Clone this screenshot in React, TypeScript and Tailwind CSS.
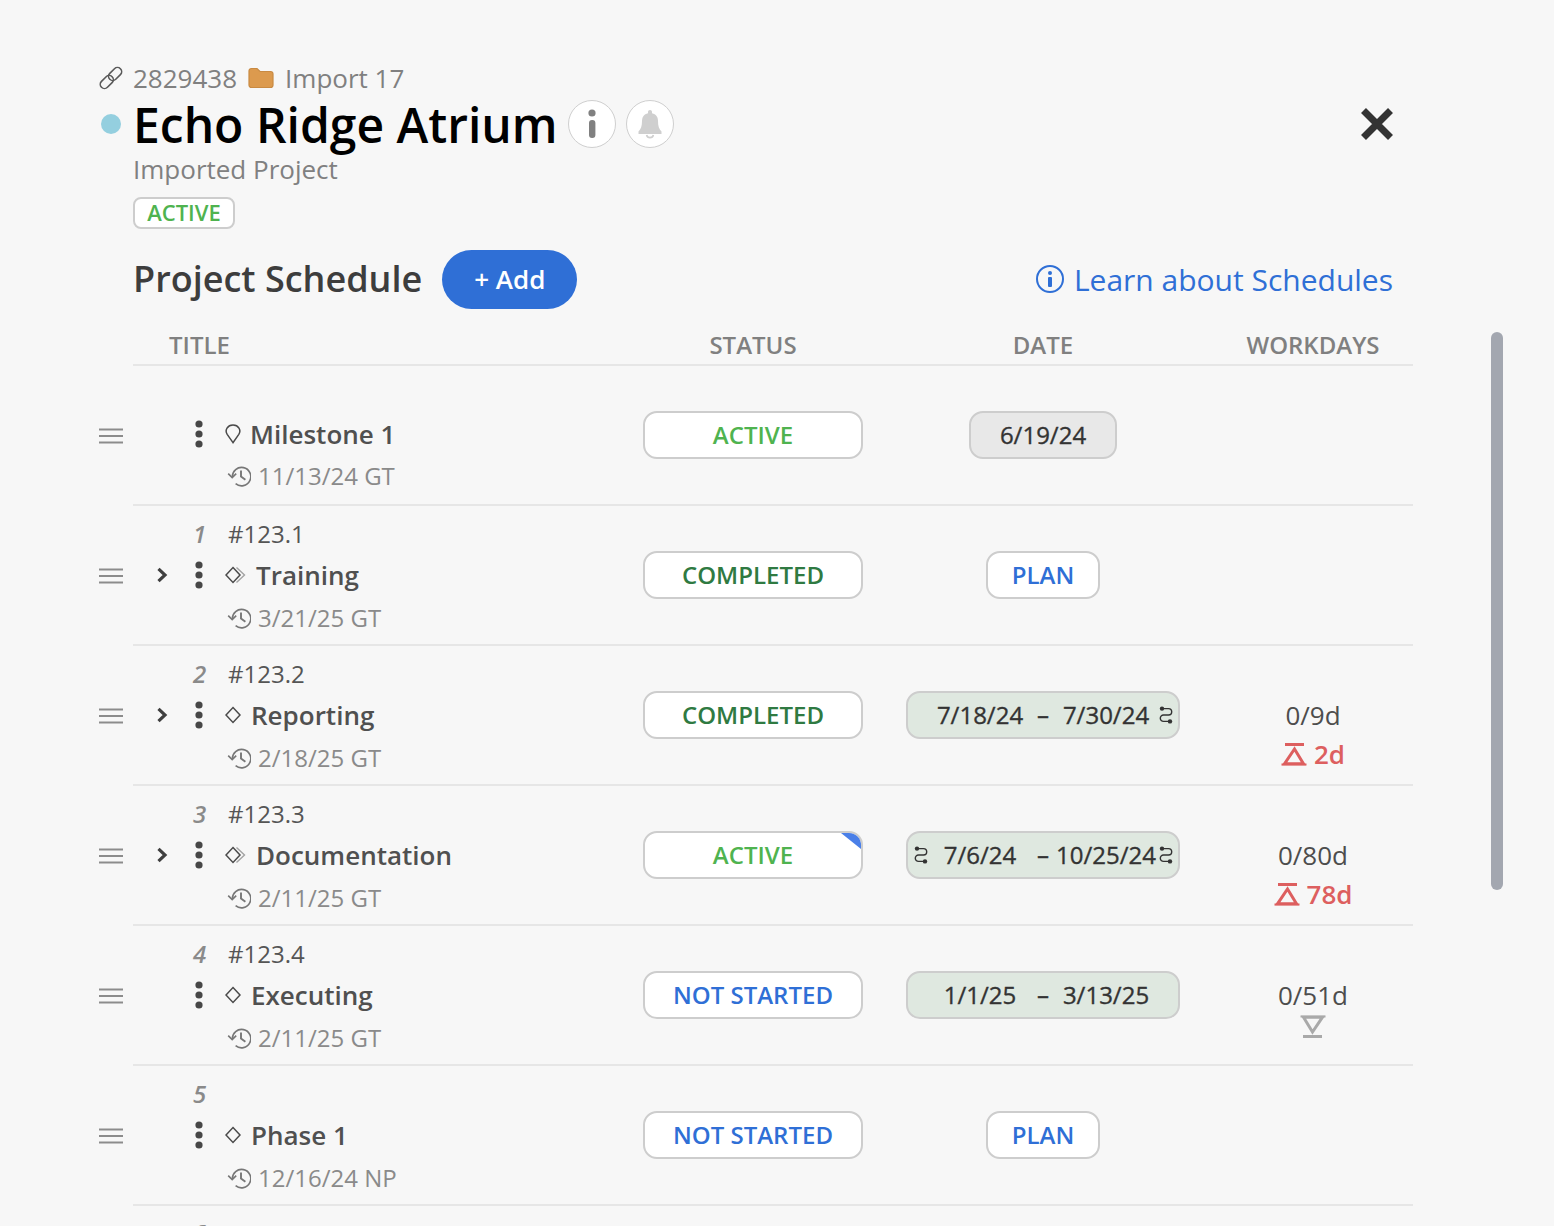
function LinkIcon() {
  return (
    <svg width="24" height="24" viewBox="0 0 24 24" className="block">
      <g fill="none" stroke="#5a5a5a" strokeWidth="1.6">
        <rect x="3.6" y="8.5" width="8.4" height="15" rx="4.2" transform="rotate(45 7.8 16)" />
        <rect x="11.9" y="0.5" width="8.4" height="15" rx="4.2" transform="rotate(45 16.1 8)" />
      </g>
    </svg>
  );
}

function HistoryIcon() {
  return (
    <svg width="24" height="24" viewBox="0 0 24 24" className="block">
      <g fill="none" stroke="#777777" strokeWidth="1.6">
        <path d="M5.4 13 A9.2 9.2 0 1 1 8.6 19.6" />
        <path d="M1.2 9.6 L5.2 13.6 L9.2 9.6" />
        <path d="M14 6.5 V12.6 L18.4 15.8" strokeWidth="1.9" />
      </g>
    </svg>
  );
}

function Handle() {
  return (
    <svg width="24" height="16" viewBox="0 0 24 16" className="block">
      <g stroke="#8c8c8c" strokeWidth="2">
        <line x1="0" x2="24" y1="1.5" y2="1.5" />
        <line x1="0" x2="24" y1="8" y2="8" />
        <line x1="0" x2="24" y1="14.5" y2="14.5" />
      </g>
    </svg>
  );
}

function Kebab() {
  return (
    <svg width="8" height="30" viewBox="0 0 8 30" className="block">
      <circle cx="4" cy="5" r="3.6" fill="#474747" />
      <circle cx="4" cy="15" r="3.6" fill="#474747" />
      <circle cx="4" cy="25" r="3.6" fill="#474747" />
    </svg>
  );
}

function Chevron() {
  return (
    <svg width="12" height="16" viewBox="0 0 12 16" className="block">
      <path d="M2.5 1.8 L9 8 L2.5 14.2" fill="none" stroke="#3f3f3f" strokeWidth="3.2" />
    </svg>
  );
}

function Pin() {
  return (
    <svg width="16" height="20" viewBox="0 0 16 20" className="block">
      <path d="M8 18.6 L2.2 10.4 C-0.6 6 2.6 1 8 1 C13.4 1 16.6 6 13.8 10.4 Z" fill="none" stroke="#4a4a4a" strokeWidth="1.5" />
    </svg>
  );
}

function Diamond({ double }: { double?: boolean }) {
  return (
    <svg width={double ? 21 : 16} height="18" viewBox={double ? "0 0 21 18" : "0 0 16 18"} className="block">
      <path d="M8 1.6 L15 9 L8 16.4 L1 9 Z" fill="none" stroke="#4a4a4a" strokeWidth="1.5" />
      {double && <path d="M11.5 1.6 L19.5 9 L11.5 16.4" fill="none" stroke="#a3a3a3" strokeWidth="1.4" />}
    </svg>
  );
}

function Route({ className }: { className: string }) {
  return (
    <svg width="14" height="18" viewBox="0 0 14 18" className={className}>
      <circle cx="3" cy="2.6" r="2.2" fill="#333" />
      <circle cx="11" cy="15.4" r="2.2" fill="#333" />
      <path d="M3 2.6 H9.5 A3.2 3.2 0 0 1 9.5 9 H4.5 A3.2 3.2 0 0 0 4.5 15.4 H11" fill="none" stroke="#333" strokeWidth="1.4" />
    </svg>
  );
}

function Hourglass({ color, down }: { color: string; down?: boolean }) {
  return (
    <svg width="26" height="23" viewBox="0 0 26 23" className={down ? "block rotate-180" : "block"}>
      <line x1="4" x2="23" y1="1.5" y2="1.5" stroke={color} strokeWidth="3" />
      <path d="M13.5 6 L22.5 20.8 H3.5 Z" fill="none" stroke={color} strokeWidth="3" />
      <line x1="0.5" x2="25.5" y1="21.5" y2="21.5" stroke={color} strokeWidth="2" />
    </svg>
  );
}

function StatusPill({ text, color, corner }: { text: string; color: string; corner?: boolean }) {
  return (
    <div className="relative flex h-[48px] w-[220px] items-center justify-center overflow-hidden rounded-[14px] border-2 border-[#cdcdcd] bg-white">
      <span className={`text-[24px] font-semibold leading-none ${color}`}>{text}</span>
      {corner && <div className="absolute right-0 top-0 h-[16px] w-[20px] bg-[#4a7fe8] [clip-path:polygon(0_0,100%_0,100%_100%)]" />}
    </div>
  );
}

type DateProps = { left: string; right: string; routeL?: boolean; routeR?: boolean };

function DateRange({ left, right, routeL, routeR }: DateProps) {
  return (
    <div className="relative grid h-[48px] w-[274px] grid-cols-[102px_24px_102px] items-center rounded-[14px] border-2 border-[#cdcdcd] bg-[#dfe8e0] px-[21px] text-center text-[24px] leading-none text-[#333333] [-webkit-text-stroke:0.35px_#333333]">
      <span className="whitespace-nowrap">{left}</span>
      <span>–</span>
      <span className="whitespace-nowrap">{right}</span>
      {routeL && <Route className="absolute left-[6px] top-[13px]" />}
      {routeR && <Route className="absolute right-[5px] top-[13px]" />}
    </div>
  );
}

type Row = {
  num?: string;
  id?: string;
  chevron?: boolean;
  icon: "pin" | "diamond" | "double";
  title: string;
  titleGap: string;
  sub: string;
  status: { text: string; color: string; corner?: boolean };
  date:
    | { kind: "single"; text: string }
    | { kind: "plan" }
    | { kind: "range"; left: string; right: string; routeL?: boolean; routeR?: boolean };
  work?: { base: string; late?: string; down?: boolean };
};

const ACTIVE = { text: "ACTIVE", color: "text-[#4fb34f]" };
const COMPLETED = { text: "COMPLETED", color: "text-[#2f7a42]" };
const NOT_STARTED = { text: "NOT STARTED", color: "text-[#2f6fd6]" };

const rows: Row[] = [
  { icon: "pin", title: "Milestone 1", titleGap: "ml-[9px]", sub: "11/13/24 GT", status: ACTIVE, date: { kind: "single", text: "6/19/24" } },
  { num: "1", id: "#123.1", chevron: true, icon: "double", title: "Training", titleGap: "ml-[10px]", sub: "3/21/25 GT", status: COMPLETED, date: { kind: "plan" } },
  { num: "2", id: "#123.2", chevron: true, icon: "diamond", title: "Reporting", titleGap: "ml-[10px]", sub: "2/18/25 GT", status: COMPLETED, date: { kind: "range", left: "7/18/24", right: "7/30/24", routeR: true }, work: { base: "0/9d", late: "2d" } },
  { num: "3", id: "#123.3", chevron: true, icon: "double", title: "Documentation", titleGap: "ml-[10px]", sub: "2/11/25 GT", status: { ...ACTIVE, corner: true }, date: { kind: "range", left: "7/6/24", right: "10/25/24", routeL: true, routeR: true }, work: { base: "0/80d", late: "78d" } },
  { num: "4", id: "#123.4", icon: "diamond", title: "Executing", titleGap: "ml-[10px]", sub: "2/11/25 GT", status: NOT_STARTED, date: { kind: "range", left: "1/1/25", right: "3/13/25" }, work: { base: "0/51d", down: true } },
  { num: "5", icon: "diamond", title: "Phase 1", titleGap: "ml-[10px]", sub: "12/16/24 NP", status: NOT_STARTED, date: { kind: "plan" } },
];

function ScheduleRow({ row, first }: { row: Row; first: boolean }) {
  return (
    <div className="flex">
      <div className="flex w-[34px] items-center pb-[1px]">
        <Handle />
      </div>
      <div className="grid h-[140px] w-[1280px] grid-cols-[500px_240px_340px_200px] items-center border-b-2 border-[#e6e6e6]">
        <div className={`grid grid-cols-[52px_28px_1fr] items-center ${first ? "grid-rows-[40px_41px_43px] pt-[1px]" : "grid-rows-[42px_41px_44px] pt-[2px]"}`}>
          <div />
          <div className="pl-[1px] text-center text-[24px] font-semibold italic leading-none text-[#8a8a8a]">{row.num}</div>
          <div className="pl-[15px] text-[24px] leading-none text-[#555555]">{row.id}</div>
          <div className="flex justify-center pl-[6px]">{row.chevron && <Chevron />}</div>
          <div className="flex justify-center">
            <Kebab />
          </div>
          <div className="flex items-center pl-[12px]">
            {row.icon === "pin" ? <Pin /> : <Diamond double={row.icon === "double"} />}
            <span className={`${row.titleGap} text-[26px] font-semibold leading-none text-[#505050]`}>{row.title}</span>
          </div>
          <div />
          <div />
          <div className="flex items-center pl-[14px] text-[24px] leading-none text-[#8a8a8a]">
            <HistoryIcon />
            <span className="ml-[7px]">{row.sub}</span>
          </div>
        </div>
        <div className="flex justify-center">
          <StatusPill {...row.status} />
        </div>
        <div className="flex justify-center">
          {row.date.kind === "single" && (
            <div className="flex h-[48px] w-[148px] items-center justify-center rounded-[14px] border-2 border-[#cdcdcd] bg-[#e8e8e8] text-[24px] leading-none text-[#333333] [-webkit-text-stroke:0.35px_#333333]">
              {row.date.text}
            </div>
          )}
          {row.date.kind === "plan" && (
            <div className="flex h-[48px] w-[114px] items-center justify-center rounded-[14px] border-2 border-[#cdcdcd] bg-white text-[24px] font-semibold leading-none text-[#2f6fd6]">
              PLAN
            </div>
          )}
          {row.date.kind === "range" && <DateRange {...row.date} />}
        </div>
        <div className="flex h-full flex-col items-center pt-[53px] text-[26px] leading-[32px] text-[#4d4d4d]">
          {row.work && <div>{row.work.base}</div>}
          {row.work?.late && (
            <div className="mt-[7px] flex items-center gap-[7px] font-semibold text-[#dd5f5f]">
              <Hourglass color="#dd5f5f" />
              <span>{row.work.late}</span>
            </div>
          )}
          {row.work?.down && (
            <div className="mt-[4px]">
              <Hourglass color="#a9a9a9" down />
            </div>
          )}
        </div>
      </div>
    </div>
  );
}

export default function App() {
  return (
    <div className="relative h-[1226px] w-[1554px] overflow-hidden bg-[#f7f7f7] font-['Open_Sans',sans-serif]">
      <div className="pl-[99px] pt-[61px]">
        <div className="flex h-[34px] items-center text-[26px] leading-none text-[#808080]">
          <LinkIcon />
          <span className="ml-[10px]">2829438</span>
          <svg width="26" height="22" viewBox="0 0 26 22" className="ml-[11px]">
            <path d="M1 4 C1 2.5 2 1.5 3.5 1.5 H9 L12 4.5 H22.5 C24 4.5 25 5.5 25 7 V18 C25 19.5 24 20.5 22.5 20.5 H3.5 C2 20.5 1 19.5 1 18 Z" fill="#dc9a4e" stroke="#c98a42" strokeWidth="1.2" />
          </svg>
          <span className="ml-[11px]">Import 17</span>
        </div>
        <div className="flex h-[58px] items-center">
          <div className="ml-[2px] h-[20px] w-[20px] rounded-full bg-[#94cfdf]" />
          <h1 className="ml-[12px] mt-[2px] text-[48px] font-semibold leading-none text-black">Echo Ridge Atrium</h1>
          <div className="ml-[10px] flex h-[48px] w-[48px] items-center justify-center rounded-full border border-[#cfcfcf] bg-white">
            <svg width="10" height="30" viewBox="0 0 10 30">
              <circle cx="5" cy="4" r="3.6" fill="#808080" />
              <rect x="2" y="11" width="6.4" height="18" rx="3" fill="#808080" />
            </svg>
          </div>
          <div className="ml-[10px] flex h-[48px] w-[48px] items-center justify-center rounded-full border border-[#cfcfcf] bg-white">
            <svg width="24" height="30" viewBox="0 0 24 30">
              <path d="M12 1 C13.2 1 14 1.8 14 3 V4.2 C18 5 20 8.2 20 12 C20 17 21 20 23.5 22.5 V25 H0.5 V22.5 C3 20 4 17 4 12 C4 8.2 6 5 10 4.2 V3 C10 1.8 10.8 1 12 1 Z" fill="#cfcfcf" />
              <path d="M8.6 26 A3.5 3.5 0 0 0 15.4 26" fill="none" stroke="#cfcfcf" strokeWidth="1.6" />
            </svg>
          </div>
        </div>
        <div className="ml-[34px] text-[26px] leading-[32px] text-[#808080]">Imported Project</div>
        <div className="ml-[34px] mt-[12px] flex h-[32px] w-[102px] items-center justify-center rounded-[8px] border-2 border-[#cdcdcd] bg-white pb-[2px] text-[22px] font-semibold leading-none text-[#4fb34f]">
          ACTIVE
        </div>
        <div className="ml-[34px] mt-[20px] flex h-[60px] w-[1260px] items-center">
          <h2 className="text-[36px] font-semibold leading-none text-[#3d3d3d]">Project Schedule</h2>
          <button className="ml-[20px] h-[59px] w-[135px] rounded-full bg-[#2f6fd6] text-[26px] font-semibold leading-none text-white">+ Add</button>
          <div className="ml-auto flex items-center gap-[9px] text-[30px] leading-none text-[#2f6fd6]">
            <svg width="30" height="30" viewBox="0 0 30 30">
              <circle cx="15" cy="15" r="13" fill="none" stroke="#2f6fd6" strokeWidth="2" />
              <circle cx="15" cy="9" r="2" fill="#2f6fd6" />
              <rect x="13" y="13" width="4" height="10" rx="1" fill="#2f6fd6" />
            </svg>
            <span className="mt-[2px]">Learn about Schedules</span>
          </div>
        </div>
        <div className="ml-[34px] mt-[15px] grid h-[42px] w-[1280px] grid-cols-[500px_240px_340px_200px] items-center border-b-2 border-[#e6e6e6] pt-[2px] text-[24px] font-semibold leading-none text-[#808080]">
          <div className="pl-[36px]">TITLE</div>
          <div className="text-center">STATUS</div>
          <div className="text-center">DATE</div>
          <div className="text-center">WORKDAYS</div>
        </div>
        <div>
          {rows.map((r, i) => (
            <ScheduleRow key={r.title} row={r} first={i === 0} />
          ))}
        </div>
        <div className="ml-[34px] mt-[15px] grid grid-cols-[52px_28px_1fr]">
          <div />
          <div className="text-center text-[24px] font-semibold italic leading-none text-[#8a8a8a]">6</div>
        </div>
      </div>
      <div className="absolute left-[1491px] top-[332px] h-[558px] w-[12px] rounded-full bg-[#a3a7b0]" />
      <svg width="34" height="34" viewBox="0 0 34 34" className="absolute left-[1360px] top-[107px]">
        <path d="M3.5 3.5 L30.5 30.5 M30.5 3.5 L3.5 30.5" stroke="#333333" strokeWidth="7" fill="none" />
      </svg>
    </div>
  );
}
